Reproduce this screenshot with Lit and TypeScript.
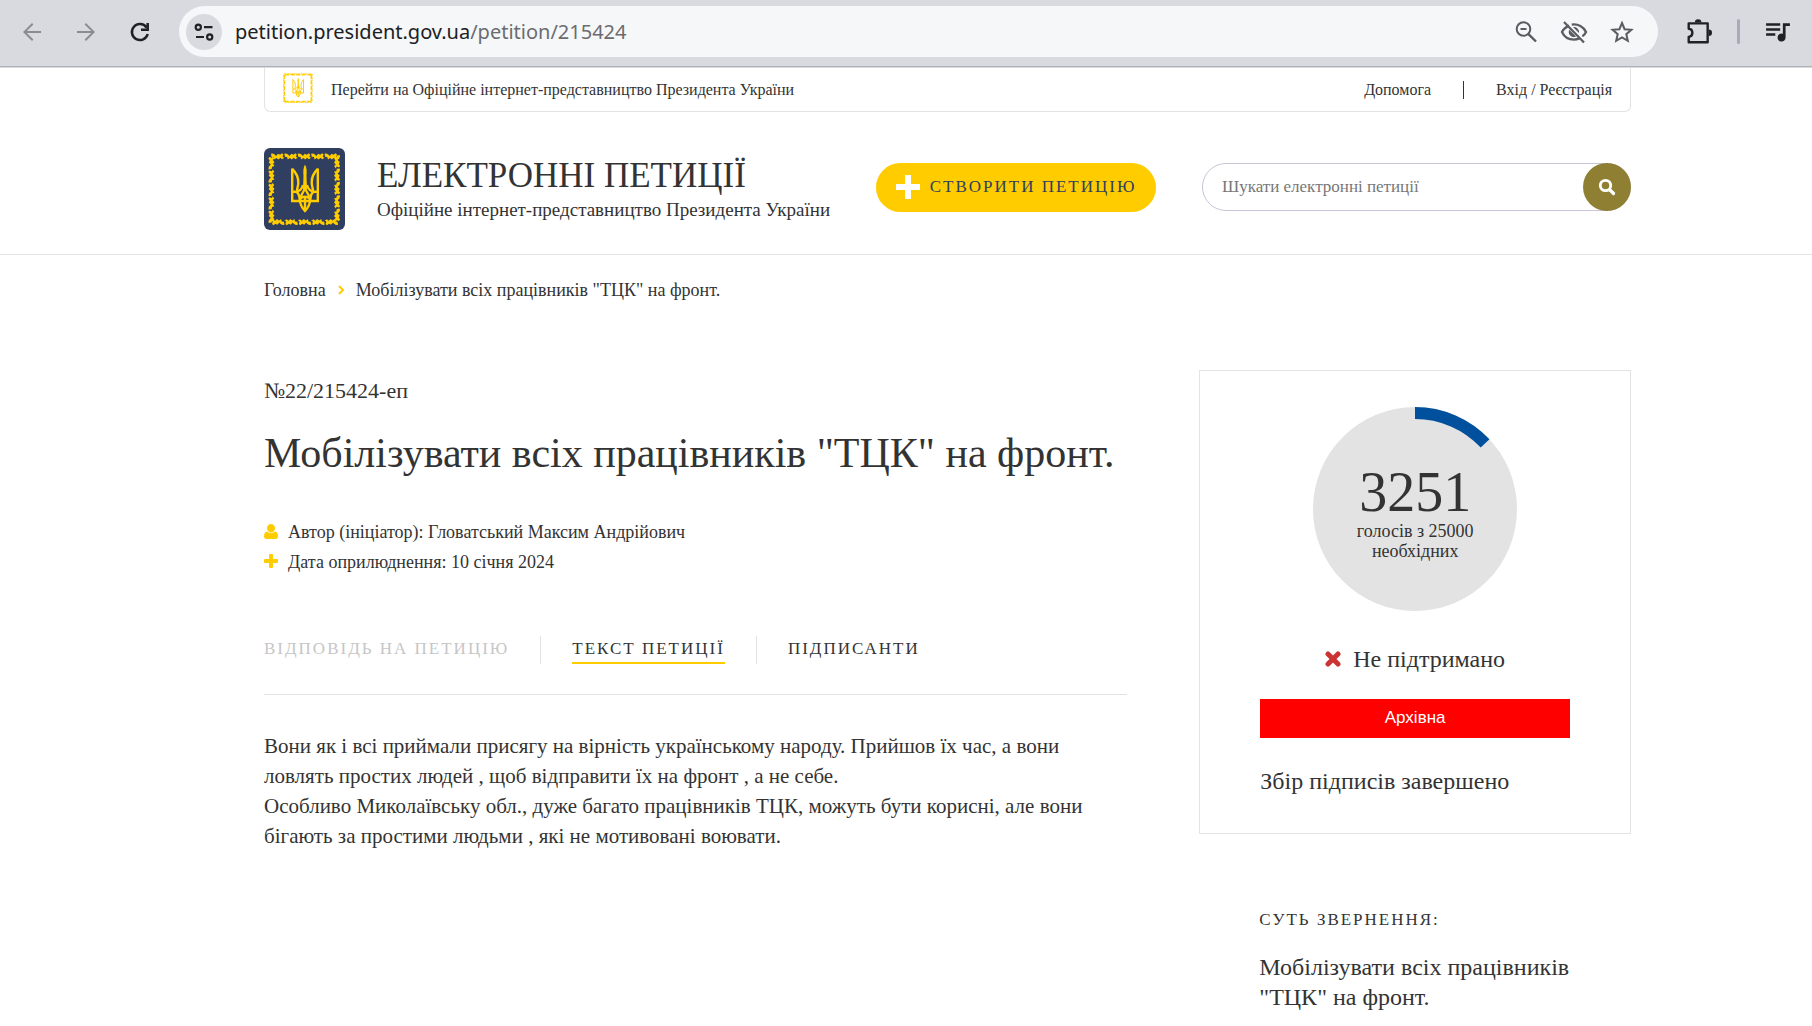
import { LitElement, html, css, svg } from "lit";
import { customElement, property } from "lit/decorators.js";

/* Leaf garland along one straight side of the emblem frame. */
const garland = (x: number, y: number, angle: number) => svg`
  <g transform="translate(${x} ${y}) rotate(${angle})">
    ${[0, 1, 2, 3, 4].map(
      (i) => svg`
        <path transform="translate(${i * 13.4} 0)"
          d="M0 -2.800 C2 -3.400 4 -2.400 5 -0.600 L7 -2.800 L9 -1.800 L11 -3.200 L12.400 -2 L11.600 0.400 L13.400 1.200 L11 2.800 L9.400 1.200 L7.400 3 L5.400 1.600 L3.400 3 L2.600 0.600 L0.400 0.200 Z"/>`
    )}
  </g>`;

const trident = svg`
  <g fill="none" stroke="currentColor" stroke-width="2.400">
    <path d="M28.200 20.500 V53 H53.800 V20.500"/>
    <path d="M28.200 21 C32.500 25 34.500 30 34.300 35 C34.200 38 33 40.500 33 42.500 C35 43.500 38 41.500 39 37"/>
    <path d="M53.800 21 C49.500 25 47.500 30 47.700 35 C47.800 38 49 40.500 49 42.500 C47 43.500 44 41.500 43 37"/>
    <path d="M28.200 43.700 H31 C33.500 43.700 35 46 35.500 50 C36 57 38 60 41 63 C44 60 46 57 46.500 50 C47 46 48.500 43.700 51 43.700 H53.800"/>
    <path d="M41 39 C40.500 45 35.500 46.500 35.800 53 M41 39 C41.500 45 46.500 46.500 46.200 53"/>
    <path d="M41 50 V63 M36 51 C38 48 44 48 46 51"/>
  </g>
  <path fill="currentColor" d="M41 16.500 C43 20 42.800 24 42.500 28 L43 41 H39 L39.500 28 C39.200 24 39 20 41 16.500 Z"/>`;

@customElement("state-emblem")
export class StateEmblem extends LitElement {
  @property({ type: Boolean, reflect: true }) outline = false;
  static styles = css`
    :host { display: block; flex: none; width: 81px; height: 82px; border-radius: 6px; background: #303e5f; color: #ffcc00; }
    :host([outline]) { width: 34px; height: 34px; margin-bottom: 3px; background: none; }
    svg { display: block; width: 100%; height: 100%; }
  `;
  render() {
    return html`<svg viewBox="0 0 81 82" aria-hidden="true">
      <g fill="currentColor">
        ${garland(7, 8.5, 0)} ${garland(73, 7, 90)} ${garland(74, 74, 180)} ${garland(7.5, 75, 270)}
      </g>
      ${trident}
    </svg>`;
  }
}

@customElement("browser-bar")
export class BrowserBar extends LitElement {
  static styles = css`
    :host { display: flex; align-items: center; box-sizing: border-box; height: 68px; padding: 0 21px 5px 20px; background: #d9dae0; box-shadow: inset 0 -1px #d9dade, inset 0 -2px #b0b1b8; }
    button { display: grid; place-items: center; flex: none; width: 24px; height: 24px; padding: 0; border: 0; background: none; color: #202124; }
    button:disabled { color: #8b8c92; }
    svg { display: block; width: 24px; height: 24px; fill: currentColor; }
    .nav { display: flex; gap: 30px; margin-right: 27px; }
    .address { display: flex; flex: 1; align-items: center; min-width: 0; height: 51px; box-sizing: border-box; padding: 0 24px 0 7px; border-radius: 26px; background: #f5f7f9; }
    .site { width: 36px; height: 36px; border-radius: 50%; background: #d9dae0; margin-right: 13px; }
    .url { flex: 1; font: 20px/30px "Noto Sans", sans-serif; color: #202124; white-space: nowrap; }
    .path { color: #6b6c70; }
    .actions { display: flex; gap: 24px; }
    .actions button { color: #5b5c5f; }
    .tools { display: flex; align-items: center; gap: 25px; margin-left: 28px; }
    .tools button, .tools svg { width: 26px; height: 26px; }
    .rule { width: 3px; height: 25px; border-radius: 2px; background: #a5abba; }
  `;
  render() {
    return html`
      <div class="nav">
        <button disabled aria-label="Назад"><svg viewBox="0 0 24 24"><path d="M12 3 13.400 4.400 6.800 11H21v2H6.800l6.600 6.600L12 21 3 12Z"/></svg></button>
        <button disabled aria-label="Вперед"><svg viewBox="0 0 24 24"><path d="M12 3 10.600 4.400 17.200 11H3v2h14.200l-6.600 6.600L12 21l9-9Z"/></svg></button>
        <button aria-label="Оновити"><svg viewBox="0 0 24 24"><path fill="none" stroke="currentColor" stroke-width="2.500" d="M18.500 7.500 A8 8 0 1 0 19.700 14 M19.700 3 V9.700 H13"/></svg></button>
      </div>
      <div class="address">
        <button class="site" aria-label="Відомості про сайт">
          <svg viewBox="0 0 24 24"><g fill="none" stroke="currentColor" stroke-width="2.200"><circle cx="6.300" cy="7.200" r="2.600"/><path d="M12 7.200H20.500M4 17H12"/><circle cx="17.700" cy="17" r="2.600"/></g></svg>
        </button>
        <span class="url">petition.president.gov.ua<span class="path">/petition/215424</span></span>
        <div class="actions">
          <button aria-label="Масштаб"><svg viewBox="0 0 24 24"><g fill="none" stroke="currentColor" stroke-width="2"><circle cx="9.500" cy="9" r="6.800"/><path d="M6.500 9h6"/><path stroke-width="2.400" d="M14.200 13.800 22 21.500"/></g></svg></button>
          <button aria-label="Стеження заблоковано"><svg viewBox="0 0 24 24" overflow="visible"><g fill="none" stroke="currentColor" stroke-width="2.300"><path d="M7.200 5.600C3.900 7 1.200 9.500 0 12c2 4.400 6.600 7.600 12 7.600 2 0 3.800-.5 5.400-1.200M9.800 4.600C16 3.600 21.800 7 24 12c-.8 1.700-1.900 3.200-3.700 4.300M2 2l20 20.500"/></g><path d="M7.300 9.800 14 16.500A5 5 0 0 1 7.300 9.800ZM11 7.100a5 5 0 0 1 5.900 5.900Z"/></svg></button>
          <button aria-label="Закладка"><svg viewBox="0 0 24 24"><path fill="none" stroke="currentColor" stroke-width="2" d="m12 3 2.600 6.200 6.800.600-5.100 4.400 1.500 6.600L12 17.300l-5.800 3.500 1.500-6.600-5.100-4.400 6.800-.600Z"/></svg></button>
        </div>
      </div>
      <div class="tools">
        <button aria-label="Розширення"><svg viewBox="0 0 24 24"><path fill="none" stroke="currentColor" stroke-width="2.200" stroke-linejoin="round" d="M2.500 4H20V21.500H2.500V16.500C7 16 7 9.500 2.500 9Z"/><path d="M8.200 3.200a3 3 0 0 1 6 0ZM21 9.800a3 3 0 0 1 0 6Z"/></svg></button>
        <span class="rule"></span>
        <button aria-label="Медіа"><svg viewBox="0 0 24 24"><path d="M1 4h13v2.200H1ZM1 8.600h13v2.200H1ZM1 13.200h8.500v2.200H1ZM16.500 4H23v2.400h-4V17a3.700 3.700 0 1 1-2.500-3.400Z"/></svg></button>
      </div>`;
  }
}

@customElement("vote-counter")
export class VoteCounter extends LitElement {
  @property({ type: Number }) votes = 0;
  @property({ type: Number }) needed = 1;
  static styles = css`
    :host { display: grid; width: 204px; height: 204px; margin: 0 auto; }
    svg, .label { grid-area: 1 / 1; }
    svg { width: 100%; height: 100%; }
    .label { display: flex; flex-direction: column; align-items: center; padding: 0 36px; margin-top: 56px; text-align: center; }
    .count { font-size: 56px; line-height: 58px; }
    .goal { font-size: 18px; line-height: 20px; }
  `;
  render() {
    const length = 2 * Math.PI * 96;
    return html`
      <svg viewBox="0 0 204 204" aria-hidden="true">
        <circle cx="102" cy="102" r="102" fill="#e3e3e3"/>
        <circle cx="102" cy="102" r="96" fill="none" stroke="#00509e" stroke-width="12" transform="rotate(-90 102 102)"
          stroke-dasharray="${(length * this.votes) / this.needed} ${length}"/>
      </svg>
      <div class="label">
        <span class="count">${this.votes}</span>
        <span class="goal">голосів з ${this.needed} необхідних</span>
      </div>`;
  }
}

@customElement("app-root")
export class AppRoot extends LitElement {
  static styles = css`
    :host { display: block; min-height: 100vh; background: #fff; color: #333; font-family: "Liberation Serif", serif; font-size: 18px; line-height: 24px; }
    a { color: inherit; text-decoration: none; }
    h1, h2, p { margin: 0; font-weight: 400; }
    svg { display: block; flex: none; }
    .wrap { padding: 0 181px 0 264px; }
    .portal { display: flex; align-items: center; justify-content: space-between; box-sizing: border-box; height: 44px; padding: 0 18px 0 16px; border: 1px solid #e3e3e3; border-top: 0; border-radius: 0 0 6px 6px; font-size: 16px; }
    .portal a { display: flex; align-items: center; gap: 16px; }
    .account { display: flex; align-items: center; gap: 32px; }
    .account span { width: 1px; height: 18px; background: #333; }
    .header { border-bottom: 1px solid #e3e3e3; }
    .head { display: flex; align-items: center; justify-content: space-between; padding-top: 36px; padding-bottom: 24px; }
    .brand { display: flex; align-items: center; gap: 32px; }
    .name { display: block; font-size: 35px; line-height: 40px; margin-bottom: 2px; }
    .sub { display: block; font-size: 19px; }
    .create { display: flex; align-items: center; gap: 10px; box-sizing: border-box; height: 49px; padding: 0 20px; margin-bottom: 4px; border-radius: 25px; background: #ffcc00; color: #303e5f; font-size: 17px; letter-spacing: 2px; }
    .search { display: flex; box-sizing: border-box; width: 429px; height: 48px; margin-bottom: 4px; border: 1px solid #c9c5d8; border-radius: 24px; }
    .search input { flex: 1; min-width: 0; padding: 0 19px; border: 0; outline: 0; background: none; font: 17px/24px "Liberation Serif", serif; color: #333; }
    .search input::placeholder { color: #777; }
    .search button { display: grid; place-items: center; flex: none; width: 48px; height: 48px; margin: -1px; padding: 0; border: 0; border-radius: 50%; background: #8f7f33; color: #fff; }
    .crumbs { display: flex; align-items: center; gap: 12px; padding-top: 23px; }
    .columns { display: grid; grid-template-columns: minmax(0, 2fr) minmax(0, 1fr); gap: 72px; padding-top: 68px; align-items: start; }
    .petition { padding-top: 9px; }
    .number { font-size: 22px; }
    .title { margin-top: 26px; font-size: 42px; line-height: 48px; }
    .meta { margin: 40px 0 59px; padding: 0; list-style: none; line-height: 30px; }
    .meta li { display: flex; align-items: center; gap: 10px; }
    .tabs { display: flex; padding-bottom: 30px; border-bottom: 1px solid #e3e3e3; font-size: 17px; line-height: 26px; letter-spacing: 2px; }
    .tabs a { border-bottom: 2px solid transparent; }
    .tabs .current { border-color: #ffcc00; }
    .tabs .off { color: #c6c6c6; }
    .tabs span { width: 1px; margin: 0 31px; background: #e3e3e3; }
    .text { margin-top: 36px; font-size: 21px; line-height: 30px; }
    .card { padding: 36px 60px; border: 1px solid #e3e3e3; font-size: 24px; line-height: 30px; }
    .status { display: flex; align-items: center; justify-content: center; gap: 12px; margin: 33px 0 25px; }
    .archive { display: block; width: 100%; height: 39px; border: 0; padding: 0 0 2px; background: #f00; color: #fff; font: 17px/24px "Liberation Sans", sans-serif; }
    .closed { margin: 28px 0 1px; }
    .essence { padding: 74px 60px 20px; font-size: 24px; line-height: 30px; }
    .essence h2 { margin-bottom: 20px; font-size: 17px; line-height: 24px; letter-spacing: 2px; }
  `;
  render() {
    return html`
      <browser-bar></browser-bar>
      <header class="header">
        <div class="wrap">
          <div class="portal">
            <a href="#portal"><state-emblem outline></state-emblem>Перейти на Офіційне інтернет-представництво Президента України</a>
            <nav class="account"><a href="#help">Допомога</a><span></span><a href="#login">Вхід / Реєстрація</a></nav>
          </div>
        </div>
        <div class="wrap head">
          <a class="brand" href="#home">
            <state-emblem></state-emblem>
            <span><span class="name">ЕЛЕКТРОННІ ПЕТИЦІЇ</span><span class="sub">Офіційне інтернет-представництво Президента України</span></span>
          </a>
          <a class="create" href="#create">
            <svg width="24" height="24" viewBox="0 0 24 24" fill="#fff"><path d="M9 0h6v9h9v6h-9v9H9v-9H0V9h9Z"/></svg>СТВОРИТИ ПЕТИЦІЮ
          </a>
          <form class="search" role="search">
            <input type="search" aria-label="Шукати електронні петиції" placeholder="Шукати електронні петиції">
            <button type="button" aria-label="Шукати"><svg width="18" height="18" viewBox="0 0 18 18" fill="none" stroke="#fff"><circle cx="7.500" cy="7.500" r="5.200" stroke-width="2.800"/><path stroke-width="3.200" stroke-linecap="round" d="m12 12 3.500 3.500"/></svg></button>
          </form>
        </div>
      </header>
      <main class="wrap">
        <nav class="crumbs">
          <a href="#home">Головна</a>
          <svg width="6" height="10" viewBox="0 0 6 10" fill="none" stroke="#ffcc00" stroke-width="2"><path d="m1 1 4 4-4 4"/></svg>
          <span>Мобілізувати всіх працівників "ТЦК" на фронт.</span>
        </nav>
        <div class="columns">
          <article class="petition">
            <p class="number">№22/215424-еп</p>
            <h1 class="title">Мобілізувати всіх працівників "ТЦК" на фронт.</h1>
            <ul class="meta">
              <li><svg width="14" height="16" viewBox="0 0 14 16" fill="#ffcc00"><path d="M7 0a4 4 0 0 1 4 4.200C11 6.500 9 8.600 7 8.600S3 6.500 3 4.200A4 4 0 0 1 7 0ZM3 7.400a5.500 5.500 0 0 0 8 0c2.200.4 3 2.600 3 5.200 0 1.600-1 2.400-2.400 2.400H2.400C1 15 0 14.200 0 12.600 0 10 .8 7.800 3 7.400Z"/></svg>Автор (ініціатор): Гловатський Максим Андрійович</li>
              <li><svg width="14" height="16" viewBox="0 0 14 16" fill="#ffcc00"><path d="M6 0h2q1 0 1 1v4h4q1 0 1 1v2q0 1-1 1H9v4q0 1-1 1H6q-1 0-1-1V9H1Q0 9 0 8V6q0-1 1-1h4V1q0-1 1-1Z"/></svg>Дата оприлюднення: 10 січня 2024</li>
            </ul>
            <nav class="tabs">
              <a class="off" href="#answer">ВІДПОВІДЬ НА ПЕТИЦІЮ</a><span></span>
              <a class="current" href="#text">ТЕКСТ ПЕТИЦІЇ</a><span></span>
              <a href="#signers">ПІДПИСАНТИ</a>
            </nav>
            <p class="text">Вони як і всі приймали присягу на вірність українському народу. Прийшов їх час, а вони ловлять простих людей , щоб відправити їх на фронт , а не себе.<br>Особливо Миколаївську обл., дуже багато працівників ТЦК, можуть бути корисні, але вони бігають за простими людьми , які не мотивовані воювати.</p>
          </article>
          <aside>
            <section class="card">
              <vote-counter votes="3251" needed="25000"></vote-counter>
              <p class="status"><svg width="16" height="16" viewBox="0 0 16 16" fill="none" stroke="#cc3333" stroke-width="5" stroke-linecap="round"><path d="m3 3 10 10M13 3 3 13"/></svg>Не підтримано</p>
              <button class="archive">Архівна</button>
              <p class="closed">Збір підписів завершено</p>
            </section>
            <section class="essence">
              <h2>СУТЬ ЗВЕРНЕННЯ:</h2>
              <p>Мобілізувати всіх працівників "ТЦК" на фронт.</p>
            </section>
          </aside>
        </div>
      </main>`;
  }
}
